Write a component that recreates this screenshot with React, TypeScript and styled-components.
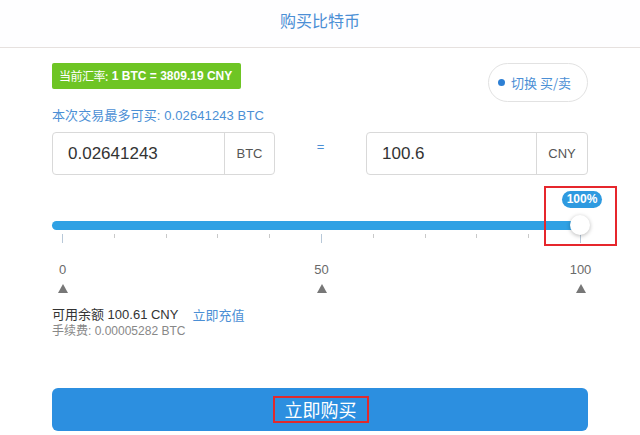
import React from "react";
import styled, { createGlobalStyle } from "styled-components";

const Global = createGlobalStyle`
  html, body { margin: 0; padding: 0; background: #fff; }
  body { font-family: "Liberation Sans", "Noto Sans CJK SC", Arial, sans-serif; width: 640px; overflow: hidden; }
`;

const Page = styled.div`
  width: 640px;
  height: 435px;
  overflow: hidden;
  background: #fff;
`;

const Header = styled.header`
  height: 47px;
  border-bottom: 1px solid #e6e1df;
  display: flex;
  justify-content: center;
  background: #fefeff;
`;

const Title = styled.h1`
  margin: 0;
  font-size: 16px;
  font-weight: normal;
  line-height: 40px;
  color: #4b8fd5;
  font-family: "Noto Sans CJK SC", sans-serif;
`;

const Content = styled.main`
  padding: 0 52px;
  display: flex;
  flex-direction: column;
`;

const TopRow = styled.div`
  margin-top: 15px;
  height: 39px;
  display: flex;
  justify-content: space-between;
  align-items: flex-start;
`;

const RateBadge = styled.div`
  height: 26px;
  box-sizing: border-box;
  background: #6ec524;
  color: #fff;
  font-size: 12px;
  line-height: 26px;
  padding: 0 9px 0 7px;
  border-radius: 2px;
  white-space: nowrap;
  display: flex;
  gap: 4px;
`;

const RateLabel = styled.span`
  font-family: "Noto Sans CJK SC", sans-serif;
  letter-spacing: -0.5px;
`;

const RateValue = styled.span`
  font-weight: bold;
`;

const TogglePill = styled.div`
  height: 39px;
  width: 100px;
  box-sizing: border-box;
  border: 1px solid #e2e2e2;
  border-radius: 20px;
  display: flex;
  align-items: center;
  padding-left: 9px;
  gap: 6px;
  color: #4b8fd5;
  font-size: 13px;
  font-family: "Noto Sans CJK SC", sans-serif;
`;

const Dot = styled.span`
  width: 7px;
  height: 7px;
  border-radius: 50%;
  background: #2d7fd4;
`;

const MaxText = styled.div`
  margin-top: 5px;
  font-size: 13px;
  line-height: 18px;
  color: #4b8fd5;
  letter-spacing: 0.1px;
`;

const InputRow = styled.div`
  margin-top: 7px;
  display: flex;
  align-items: center;
`;

const InputGroup = styled.div<{ $w: number; $addon: number }>`
  width: ${(p) => p.$w}px;
  height: 43px;
  box-sizing: border-box;
  border: 1px solid #d9d9d9;
  border-radius: 4px;
  display: grid;
  grid-template-columns: 1fr ${(p) => p.$addon}px;
`;

const InputValue = styled.div`
  padding-left: 15px;
  font-size: 17px;
  line-height: 41px;
  color: #333;
`;

const Addon = styled.div`
  border-left: 1px solid #d9d9d9;
  font-size: 13px;
  line-height: 41px;
  text-align: center;
  color: #555;
`;

const Equals = styled.div`
  flex: 1;
  text-align: center;
  color: #4b8fd5;
  font-size: 13px;
  margin-top: -14px;
`;

const SliderArea = styled.div`
  position: relative;
  padding-top: 46px;
`;

const Track = styled.div`
  width: 528px;
  height: 9px;
  border-radius: 5px 0 0 5px;
  background: #2fa1e4;
`;

const Thumb = styled.div`
  position: absolute;
  left: 518px;
  top: 40px;
  width: 20px;
  height: 20px;
  border-radius: 50%;
  background: #fff;
  box-shadow: 0 1px 4px rgba(0, 0, 0, 0.28);
`;

const Tip = styled.div`
  position: absolute;
  left: 510px;
  top: 16px;
  width: 40px;
  height: 17px;
  border-radius: 9px;
  background: #2e9ae0;
  color: #fff;
  font-size: 12px;
  font-weight: bold;
  line-height: 17px;
  text-align: center;
`;

const Highlight = styled.div`
  position: absolute;
  left: 492px;
  top: 11px;
  width: 73px;
  height: 60px;
  box-sizing: border-box;
  border: 2px solid #e6262c;
`;

const Ticks = styled.div`
  margin: 4px 0 0 10px;
  width: 519px;
  height: 9px;
  display: flex;
  justify-content: space-between;
  align-items: flex-start;
`;

const Tick = styled.span<{ $major?: boolean }>`
  width: 1px;
  height: ${(p) => (p.$major ? 9 : 4)}px;
  background: ${(p) => (p.$major ? "#b8c8d8" : "#c9c9c9")};
`;

const Marks = styled.div<{ $top: number }>`
  margin: ${(p) => p.$top}px 0 0 10px;
  width: 519px;
  display: flex;
  justify-content: space-between;
`;

const Mark = styled.div`
  width: 1px;
  display: flex;
  justify-content: center;
  overflow: visible;
`;

const MarkLabel = styled.span`
  font-size: 13px;
  line-height: 16px;
  color: #6a6a6a;
  white-space: nowrap;
`;

const Triangle = styled.span`
  width: 0;
  height: 0;
  border-left: 5px solid transparent;
  border-right: 5px solid transparent;
  border-bottom: 9px solid #777;
`;

const Balance = styled.div`
  margin-top: 13px;
  font-size: 13px;
  line-height: 18px;
  color: #333;
  display: flex;
  gap: 14px;
`;

const Link = styled.span`
  color: #4b8fd5;
  font-family: "Noto Sans CJK SC", sans-serif;
`;

const Fee = styled.div`
  font-size: 12px;
  line-height: 14px;
  color: #888;
`;

const BuyButton = styled.button`
  margin-top: 50px;
  height: 43px;
  width: 536px;
  border: none;
  border-radius: 6px;
  background: #2c8fe0;
  display: flex;
  justify-content: center;
  align-items: center;
  padding: 0;
  padding-left: 1px;
`;

const BuyLabel = styled.span`
  border: 2px solid #e02a2e;
  padding: 0 10px;
  color: #fff;
  font-size: 18px;
  line-height: 23px;
  font-family: "Noto Sans CJK SC", sans-serif;
`;

export default function App() {
  const ticks = Array.from({ length: 11 }, (_, i) => i);
  const marks = ["0", "50", "100"];
  return (
    <Page>
      <Global />
      <Header>
        <Title>购买比特币</Title>
      </Header>
      <Content>
        <TopRow>
          <RateBadge>
            <RateLabel>当前汇率:</RateLabel>
            <RateValue>1 BTC = 3809.19 CNY</RateValue>
          </RateBadge>
          <TogglePill>
            <Dot />
            切换 买/卖
          </TogglePill>
        </TopRow>
        <MaxText>本次交易最多可买: 0.02641243 BTC</MaxText>
        <InputRow>
          <InputGroup $w={223} $addon={50}>
            <InputValue>0.02641243</InputValue>
            <Addon>BTC</Addon>
          </InputGroup>
          <Equals>=</Equals>
          <InputGroup $w={222} $addon={51}>
            <InputValue>100.6</InputValue>
            <Addon>CNY</Addon>
          </InputGroup>
        </InputRow>
        <SliderArea>
          <Track />
          <Ticks>
            {ticks.map((i) => (
              <Tick key={i} $major={i % 5 === 0} />
            ))}
          </Ticks>
          <Marks $top={19}>
            {marks.map((m) => (
              <Mark key={m}>
                <MarkLabel>{m}</MarkLabel>
              </Mark>
            ))}
          </Marks>
          <Marks $top={6}>
            {marks.map((m) => (
              <Mark key={m}>
                <Triangle />
              </Mark>
            ))}
          </Marks>
          <Thumb />
          <Tip>100%</Tip>
          <Highlight />
        </SliderArea>
        <Balance>
          <span>可用余额 100.61 CNY</span>
          <Link>立即充值</Link>
        </Balance>
        <Fee>手续费: 0.00005282 BTC</Fee>
        <BuyButton>
          <BuyLabel>立即购买</BuyLabel>
        </BuyButton>
      </Content>
    </Page>
  );
}
